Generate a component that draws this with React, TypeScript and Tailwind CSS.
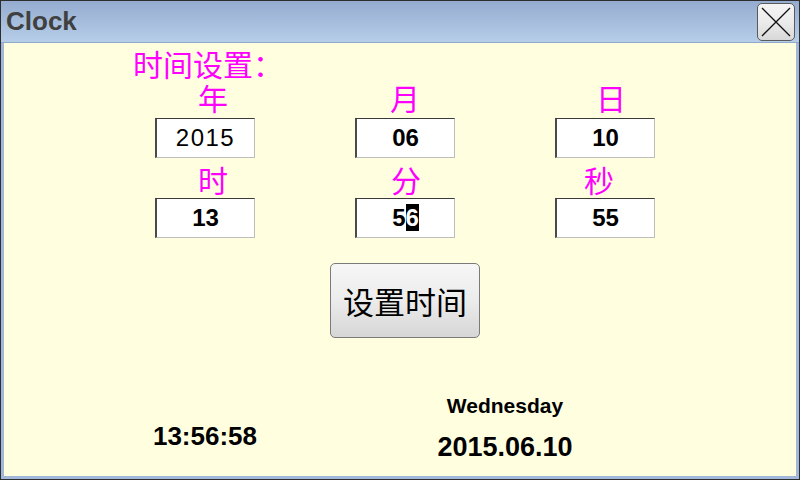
import React from 'react';

const cjk = { fontFamily: '"Noto Sans CJK SC", "Noto Sans", sans-serif' };
const arial = { fontFamily: '"Liberation Sans", Arial, sans-serif' };

function Field({ value, bold = true, cursor }: { value: string; bold?: boolean; cursor?: boolean }) {
  return (
    <div
      className="w-[100px] h-[40px] bg-white border-t border-l-2 border-t-[#3a3a3a] border-l-[#4a4a4a] border-b border-r border-b-[#bdbdbd] border-r-[#bdbdbd] flex items-center justify-center text-black"
      style={arial}
    >
      {cursor ? (
        <span className="text-[24px] font-bold leading-none">
          {value.slice(0, -1)}
          <span className="bg-black text-white">{value.slice(-1)}</span>
        </span>
      ) : (
        <span className={`leading-none ${bold ? 'text-[24px] font-bold' : 'text-[24px] tracking-[1.5px]'}`}>{value}</span>
      )}
    </div>
  );
}

function Label({ text, className }: { text: string; className: string }) {
  return (
    <div className={`w-[100px] flex items-end justify-center text-[30px] leading-none text-[#ff00ff] ${className}`} style={cjk}>
      <span>{text}</span>
    </div>
  );
}

export default function App() {
  return (
    <div className="w-[800px] h-[480px] flex flex-col bg-[#a1b8da] border border-[#2e2e2e] overflow-hidden">
      <div className="h-[42px] flex items-center justify-between bg-linear-to-b from-[#95acd0] to-[#b6cee8] border-b border-b-[#8fa9cd] pl-[5px] pr-[4px]">
        <span className="text-[26px] font-bold text-[#404040] leading-none mt-[-2px]" style={arial}>
          Clock
        </span>
        <div className="w-[38px] h-[38px] rounded-[5px] border border-[#5a5a5a] bg-linear-to-b from-[#f4f4f4] via-[#ececec] to-[#d8d8d8] flex items-center justify-center">
          <svg width="32" height="32" viewBox="0 0 32 32">
            <path d="M2 2 L30 30 M30 2 L2 30" stroke="#111" strokeWidth="1.3" fill="none" />
          </svg>
        </div>
      </div>

      <div className="flex-1 mx-[3px] mb-[3px] bg-[#ffffe0] flex flex-col">
        <div className="pl-[129px] pt-[5px] text-[30px] leading-[30px] text-[#ff00ff]" style={cjk}>
          时间设置：
        </div>

        <div className="flex gap-[100px] pl-[151px]">
          <div className="flex flex-col">
            <Label text="年" className="h-[40px] pb-[6px] pl-[16px]" />
            <Field value="2015" bold={false} />
          </div>
          <div className="flex flex-col">
            <Label text="月" className="h-[40px] pb-[6px]" />
            <Field value="06" />
          </div>
          <div className="flex flex-col">
            <Label text="日" className="h-[40px] pb-[6px] pl-[12px]" />
            <Field value="10" />
          </div>
        </div>

        <div className="flex gap-[100px] pl-[151px]">
          <div className="flex flex-col">
            <Label text="时" className="h-[40px] pb-[4px] pl-[16px]" />
            <Field value="13" />
          </div>
          <div className="flex flex-col">
            <Label text="分" className="h-[40px] pb-[4px] pl-[2px]" />
            <Field value="56" cursor />
          </div>
          <div className="flex flex-col">
            <Label text="秒" className="h-[40px] pb-[4px] pr-[12px]" />
            <Field value="55" />
          </div>
        </div>

        <div className="flex pl-[326px] mt-[25px]">
          <button
            className="w-[150px] h-[75px] rounded-[5px] border border-[#7a7a7a] bg-linear-to-b from-[#f6f6f6] via-[#ececec] to-[#d6d6d6] flex items-center justify-center text-[31px] text-black leading-none"
            style={cjk}
          >
            设置时间
          </button>
        </div>

        <div className="flex pl-[51px] mt-[57px]">
          <div className="w-[300px] pt-[28px] text-center text-[26px] font-bold leading-none text-black" style={arial}>
            13:56:58
          </div>
          <div className="w-[300px] flex flex-col items-center text-black" style={arial}>
            <span className="text-[21px] font-bold leading-none">Wednesday</span>
            <span className="text-[27px] font-bold leading-none mt-[18px]">2015.06.10</span>
          </div>
        </div>
      </div>
    </div>
  );
}
